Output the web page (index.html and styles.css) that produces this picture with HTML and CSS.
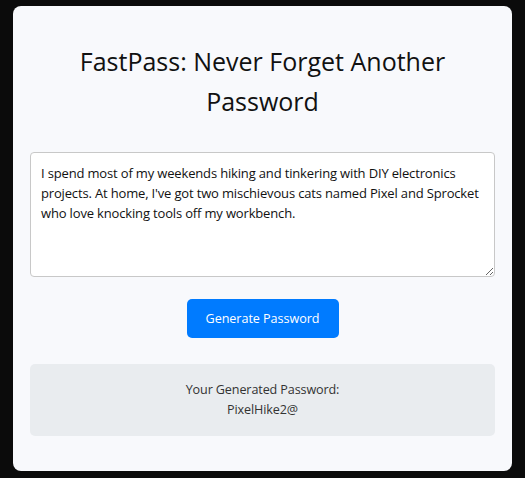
FILE: index.html
```html
<!DOCTYPE html>
<html lang="en">
<head>
<meta charset="utf-8">
<title>FastPass</title>
<link rel="stylesheet" href="styles.css">
</head>
<body>
<main class="card">
  <h1 class="title">FastPass: Never Forget Another Password</h1>
  <textarea class="story">I spend most of my weekends hiking and tinkering with DIY electronics projects. At home, I've got two mischievous cats named Pixel and Sprocket who love knocking tools off my workbench.</textarea>
  <div class="actions">
    <button class="btn" type="button">Generate Password</button>
  </div>
  <section class="result">
    <div>Your Generated Password:</div>
    <div class="pw">PixelHike2@</div>
  </section>
</main>
</body>
</html>
```
FILE: styles.css
```css
html, body {
  margin: 0;
  padding: 0;
  background: #0b0b0b;
}
body {
  font-family: "Open Sans", "Noto Sans", sans-serif;
  padding-top: 6px;
}
.card {
  box-sizing: border-box;
  width: 499px;
  margin: 0 auto;
  background: #f8f9fc;
  border-radius: 8px;
  padding: 17px 17px 35px;
  display: flex;
  flex-direction: column;
}
.title {
  margin: 18px 0 0;
  font-size: 25px;
  line-height: 40px;
  font-weight: 400;
  color: #111;
  text-align: center;
  padding: 0 40px;
}
.story {
  box-sizing: border-box;
  margin-top: 31px;
  width: 100%;
  height: 125px;
  padding: 10px;
  border: 1px solid #c8c8c8;
  border-radius: 4px;
  background: #fff;
  font-family: inherit;
  font-size: 13px;
  letter-spacing: -0.16px;
  line-height: 20px;
  color: #111;
  resize: vertical;
}
.actions {
  display: flex;
  justify-content: center;
  margin-top: 22px;
}
.btn {
  border: 0;
  border-radius: 5px;
  background: #007bff;
  color: #fff;
  font-family: inherit;
  font-size: 12.6px;
  letter-spacing: -0.05px;
  padding: 0;
  white-space: nowrap;
  width: 152px;
  height: 39px;
}
.result {
  margin-top: 26px;
  background: #e9ecef;
  border-radius: 5px;
  padding: 16px;
  text-align: center;
  font-size: 12.6px;
  letter-spacing: -0.12px;
  line-height: 20px;
  color: #333;
}
```
